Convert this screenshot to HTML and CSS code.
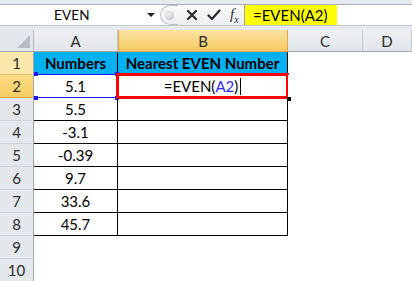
FILE: index.html
```html
<!DOCTYPE html>
<html lang="en">
<head>
  <meta charset="UTF-8">
  <title>EVEN Function</title>
  <link rel="stylesheet" href="styles.css">
</head>
<body>
  <div class="formula-bar">
    <div class="bar">
      <div class="name-box">
        <span class="name">EVEN</span>
        <span class="drop"></span>
      </div>
      <div class="grip"><span class="dot"></span></div>
      <div class="buttons">
        <!-- cancel -->
        <svg width="12" height="12" viewBox="0 0 12 12">
          <path d="M2 2 L10 10 M10 2 L2 10" stroke="#2b2b2b" stroke-width="2.2" stroke-linecap="round"/>
        </svg>
        <!-- enter -->
        <svg width="14" height="12" viewBox="0 0 14 12">
          <path d="M1.5 6.5 L5 10 L12.5 1.5" stroke="#2b2b2b" stroke-width="2.2" fill="none" stroke-linecap="round" stroke-linejoin="round"/>
        </svg>
        <span class="fx">f<sub>x</sub></span>
      </div>
      <div class="formula">=EVEN(A2)</div>
      <div class="rest"></div>
    </div>
  </div>

  <div class="sheet">
    <!-- column headers -->
    <div class="corner"></div>
    <div class="col-head">A</div>
    <div class="col-head active">B</div>
    <div class="col-head">C</div>
    <div class="col-head">D</div>

    <!-- row 1 -->
    <div class="row-head light">1</div>
    <div class="cell title sel-top">Numbers</div>
    <div class="cell title">Nearest EVEN Number</div>
    <div class="cell blank"></div>
    <div class="cell blank"></div>

    <!-- row 2 -->
    <div class="row-head active">2</div>
    <div class="cell data ref-cell">5.1
      <span class="knob tl"></span><span class="knob tr"></span>
      <span class="knob bl"></span><span class="knob br"></span>
    </div>
    <div class="cell data editing">=EVEN(<span class="ref">A2</span>)<span class="caret"></span></div>
    <div class="cell blank"></div>
    <div class="cell blank"></div>

    <div class="row-head">3</div>
    <div class="cell data">5.5</div>
    <div class="cell data"></div>
    <div class="cell blank"></div>
    <div class="cell blank"></div>

    <div class="row-head">4</div>
    <div class="cell data">-3.1</div>
    <div class="cell data"></div>
    <div class="cell blank"></div>
    <div class="cell blank"></div>

    <div class="row-head">5</div>
    <div class="cell data">-0.39</div>
    <div class="cell data"></div>
    <div class="cell blank"></div>
    <div class="cell blank"></div>

    <div class="row-head">6</div>
    <div class="cell data">9.7</div>
    <div class="cell data"></div>
    <div class="cell blank"></div>
    <div class="cell blank"></div>

    <div class="row-head">7</div>
    <div class="cell data">33.6</div>
    <div class="cell data"></div>
    <div class="cell blank"></div>
    <div class="cell blank"></div>

    <div class="row-head">8</div>
    <div class="cell data">45.7</div>
    <div class="cell data"></div>
    <div class="cell blank"></div>
    <div class="cell blank"></div>

    <div class="row-head">9</div>
    <div class="cell blank"></div>
    <div class="cell blank"></div>
    <div class="cell blank"></div>
    <div class="cell blank"></div>

    <div class="row-head">10</div>
    <div class="cell blank"></div>
    <div class="cell blank"></div>
    <div class="cell blank"></div>
    <div class="cell blank"></div>
  </div>
</body>
</html>
```

FILE: styles.css
```css
body {
  margin: 0;
  background-color: #fff;
  font-family: Lato, 'Open Sans', sans-serif;
  color: #000;
  overflow: hidden;
}

/* Formula bar */
.formula-bar {
  height: 30px;
  box-sizing: border-box;
  padding-top: 4px;
  background-color: #e6e9ed;
}

.bar {
  display: flex;
  height: 22px;
  box-sizing: border-box;
  border-top: 1px solid #a9afb6;
  border-bottom: 1px solid #c5cad0;
  background-color: #fff;
}

.name-box {
  width: 160px;
  display: flex;
  align-items: center;
  position: relative;
}

.name {
  font-size: 13.5px;
  margin-left: 54px;
  letter-spacing: 0.2px;
}

.drop {
  position: absolute;
  left: 147px;
  top: 8px;
  width: 0;
  height: 0;
  border-left: 4px solid transparent;
  border-right: 4px solid transparent;
  border-top: 4px solid #222;
}

.grip {
  width: 18px;
  height: 20px;
  box-sizing: border-box;
  border: 1px solid #b9bec4;
  border-right: none;
  border-radius: 10px 0 0 10px;
  background: linear-gradient(#fafafa, #eceef1);
  display: flex;
  align-items: center;
  justify-content: center;
}

.dot {
  width: 9px;
  height: 9px;
  border-radius: 50%;
  background: radial-gradient(circle at 40% 35%, #f4f4f4, #b5b9be);
}

.buttons {
  width: 67px;
  display: flex;
  align-items: center;
  gap: 9px;
  padding-left: 8px;
  box-sizing: border-box;
  border-right: 1px solid #9ea4ab;
  background: linear-gradient(#fafafa, #eceef1);
}

.fx {
  font-family: 'Liberation Serif', serif;
  font-style: italic;
  font-size: 15px;
  color: #333;
}

.fx sub {
  font-size: 10px;
}

.formula {
  width: 92px;
  background-color: #ffff00;
  font-size: 15px;
  line-height: 20px;
  padding-left: 8px;
  box-sizing: border-box;
}

.rest {
  flex: 1;
}

/* Sheet grid */
.sheet {
  display: grid;
  grid-template-columns: 34px 84px 170px 75px 49px;
  grid-template-rows: 22px repeat(10, 23px);
}

.corner {
  position: relative;
  background-color: #e4e7eb;
  border-right: 1px solid #b3b9c0;
  border-bottom: 1px solid #9ea5ad;
  box-sizing: border-box;
}

.corner::after {
  content: "";
  position: absolute;
  right: 3px;
  bottom: 3px;
  border-left: 13px solid transparent;
  border-bottom: 13px solid #b7bcc2;
}

.col-head {
  display: flex;
  align-items: center;
  justify-content: center;
  font-size: 15px;
  color: #2c2c2c;
  background: linear-gradient(#eef0f3, #e2e5e9);
  border-right: 1px solid #c3c8ce;
  border-bottom: 1px solid #9ea5ad;
  box-sizing: border-box;
}

.col-head.active {
  background: linear-gradient(#fbe3a2, #f6ca63);
  border-left: 1px solid #e2a645;
  border-right: 1px solid #e2a645;
  border-bottom: 1px solid #e2a645;
}

.row-head {
  display: flex;
  align-items: center;
  justify-content: center;
  font-size: 15px;
  color: #2c2c2c;
  background-color: #e4e7eb;
  border-right: 1px solid #9ea5ad;
  border-bottom: 1px solid #cdd2d8;
  box-sizing: border-box;
}

.row-head.light {
  background-color: #fce8ab;
  border-bottom-color: #e8c172;
}

.row-head.active {
  background: linear-gradient(#fadb86, #f7ce62);
  border-bottom-color: #e2a645;
}

.cell {
  position: relative;
  display: flex;
  align-items: center;
  justify-content: center;
  font-size: 15px;
  box-sizing: border-box;
}

.title {
  background-color: #00b0f0;
  font-weight: bold;
  border-right: 1px solid #000;
  border-bottom: 1px solid #000;
}

.data {
  border-right: 1px solid #000;
  border-bottom: 1px solid #000;
}

.sel-top {
  border-bottom-color: #1515ff;
}

.ref-cell {
  border-bottom-color: #1515ff;
}

.knob {
  position: absolute;
  width: 4px;
  height: 4px;
  background-color: #1515ff;
}

.knob.tl { left: 0; top: -3px; }
.knob.tr { right: -2px; top: -3px; }
.knob.bl { left: 0; bottom: -3px; }
.knob.br { right: -2px; bottom: -3px; }

.editing::after {
  content: "";
  position: absolute;
  left: -2px;
  top: -2px;
  right: -2px;
  bottom: -2px;
  border: 3px solid #ff0000;
}

.editing::before {
  content: "";
  position: absolute;
  right: -4px;
  bottom: -4px;
  width: 4px;
  height: 4px;
  background-color: #000;
  z-index: 1;
}

.ref {
  color: #2a2aff;
}

.caret {
  display: inline-block;
  width: 1px;
  height: 17px;
  margin-left: 2px;
  background-color: #000;
}

.blank {
  background-color: #fff;
}
```
